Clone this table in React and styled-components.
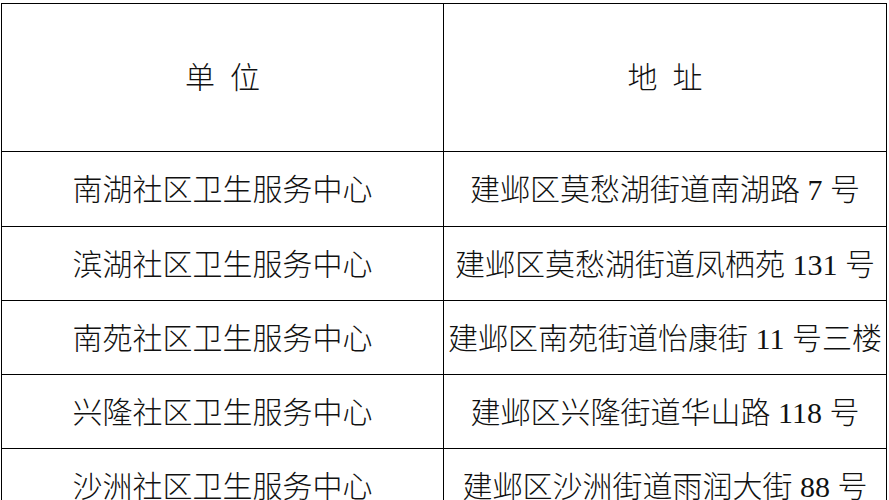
import React from "react";
import styled, { createGlobalStyle } from "styled-components";

/* ================= global ================= */
const GlobalStyle = createGlobalStyle`
  html, body {
    margin: 0;
    padding: 0;
    background: #ffffff;
  }
  body {
    font-family: "Liberation Serif", "Noto Sans CJK SC", serif;
    color: #000000;
  }
`;

/* ================= styled-components ================= */
const Page = styled.div`
  padding: 3px 0 0 1px;
  width: 889px;
  height: 500px;
  box-sizing: border-box;
  overflow: hidden;
`;

const Grid = styled.div`
  display: grid;
  grid-template-columns: 442px 443px;
  width: 886px;
  box-sizing: border-box;
  border-top: 1px solid #000;
  border-left: 1px solid #000;
`;

const Cell = styled.div`
  box-sizing: border-box;
  height: ${(p) => p.$h}px;
  border-right: 1px solid #000;
  border-bottom: 1px solid #000;
  display: flex;
  align-items: center;
  justify-content: center;
  font-size: 30px;
  line-height: 1;
  font-weight: 300;
  color: #111;
  white-space: nowrap;
  overflow: hidden;
  word-spacing: ${(p) => (p.$head ? "7.5px" : "0")};
  padding-top: ${(p) => (p.$head ? "0" : "2px")};
`;

/* ================= data ================= */
const rows = [
  { unit: "南湖社区卫生服务中心", addr: "建邺区莫愁湖街道南湖路 7 号", h: 75 },
  { unit: "滨湖社区卫生服务中心", addr: "建邺区莫愁湖街道凤栖苑 131 号", h: 74 },
  { unit: "南苑社区卫生服务中心", addr: "建邺区南苑街道怡康街 11 号三楼", h: 74 },
  { unit: "兴隆社区卫生服务中心", addr: "建邺区兴隆街道华山路 118 号", h: 74 },
  { unit: "沙洲社区卫生服务中心", addr: "建邺区沙洲街道雨润大街 88 号", h: 74 },
];

/* ================= App ================= */
const App = () => {
  return (
    <Page>
      <GlobalStyle />
      <Grid>
        <Cell $h={148} $head>单 位</Cell>
        <Cell $h={148} $head>地 址</Cell>
        {rows.map((r) => (
          <React.Fragment key={r.unit}>
            <Cell $h={r.h}>{r.unit}</Cell>
            <Cell $h={r.h}>{r.addr}</Cell>
          </React.Fragment>
        ))}
      </Grid>
    </Page>
  );
};

export default App;
